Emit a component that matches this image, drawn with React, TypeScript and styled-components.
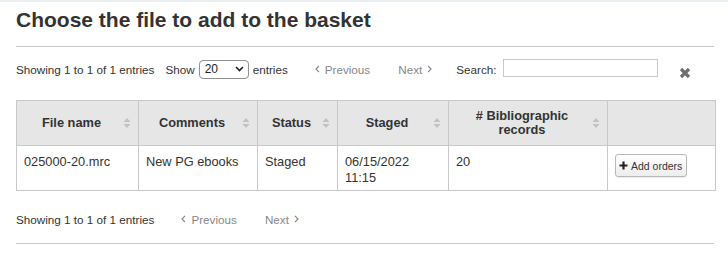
import React from "react";
import styled, { createGlobalStyle } from "styled-components";

const GlobalStyle = createGlobalStyle`
  html, body {
    margin: 0;
    padding: 0;
    background: #ffffff;
  }
  body {
    font-family: "Liberation Sans", Arial, sans-serif;
    color: #333333;
    border-top: 2px solid #e9eef2;
  }
`;

const Page = styled.div`
  padding: 0 14px 0 16px;
`;

const Title = styled.h1`
  margin: 0;
  padding-top: 6px;
  height: 38px;
  font-size: 21px;
  font-weight: bold;
  color: #333333;
`;

const Rule = styled.hr<{ $top?: number }>`
  margin: ${(p) => p.$top ?? 0}px 0 0 0;
  border: 0;
  border-top: 1px solid #c8c8c8;
`;

const InfoBar = styled.div<{ $top: number; $height: number }>`
  display: flex;
  align-items: center;
  height: ${(p) => p.$height}px;
  margin-top: ${(p) => p.$top}px;
  font-size: 11.7px;
`;

const Info = styled.span<{ $gap: number }>`
  margin-right: ${(p) => p.$gap}px;
  color: #333;
`;

const Label = styled.span`
  color: #333;
`;

const Select = styled.div`
  display: flex;
  align-items: center;
  justify-content: space-between;
  box-sizing: border-box;
  width: 50px;
  height: 19px;
  margin: 0 4px 0 4px;
  padding: 0 4px 0 5px;
  border: 1px solid #8f8f8f;
  border-radius: 4px;
  font-size: 12px;
  color: #222;
`;

const PageLink = styled.span<{ $gap: number }>`
  display: flex;
  align-items: center;
  gap: 5px;
  color: #888888;
  margin-right: ${(p) => p.$gap}px;
`;

const SearchInput = styled.div`
  box-sizing: border-box;
  width: 155px;
  height: 18px;
  margin-left: 6px;
  margin-top: -2px;
  border: 1px solid #c8c8c8;
`;

const Clear = styled.span`
  display: flex;
  margin-left: 21px;
  margin-top: 7px;
`;

const Spacer = styled.div<{ $h: number }>`
  height: ${(p) => p.$h}px;
`;

const Table = styled.table`
  width: 699px;
  border-collapse: collapse;
  table-layout: fixed;
  font-size: 12.8px;
`;

const Th = styled.th<{ $w: number }>`
  width: ${(p) => p.$w}px;
  height: 45px;
  padding: 0 8px;
  background: #e6e6e6;
  border: 1px solid #c8c8c8;
  font-weight: bold;
  color: #333;
  line-height: 14px;
  box-sizing: border-box;
`;

const HeadInner = styled.div`
  position: relative;
  display: flex;
  align-items: center;
  justify-content: center;
  padding-right: 12px;
`;

const HeadText = styled.span`
  max-width: 110px;
`;

const SortIcon = styled.svg`
  position: absolute;
  right: -1px;
  top: 50%;
  margin-top: -6px;
`;

const Td = styled.td`
  height: 45px;
  padding: 8px 7px 0 7px;
  vertical-align: top;
  border: 1px solid #c8c8c8;
  color: #333;
  line-height: 16px;
  box-sizing: border-box;
`;

const Button = styled.button`
  display: inline-flex;
  align-items: center;
  gap: 3px;
  height: 23px;
  padding: 0 4px 0 3px;
  font-family: "Liberation Sans", Arial, sans-serif;
  font-size: 10.5px;
  color: #333;
  background: linear-gradient(#ffffff, #ededed);
  border: 1px solid #b8b8b8;
  border-radius: 3px;
  box-shadow: 0 1px 1px rgba(0, 0, 0, 0.08);
`;

const Sort = () => (
  <SortIcon width="8" height="12" viewBox="0 0 8 12">
    <path d="M4 1 L7.5 5 L0.5 5 Z" fill="#c2c2c2" />
    <path d="M4 11 L7.5 7 L0.5 7 Z" fill="#c2c2c2" />
  </SortIcon>
);

const Chevron = ({ dir }: { dir: "left" | "right" }) => (
  <svg width="5" height="8" viewBox="0 0 5 8">
    <path
      d={dir === "left" ? "M4 0.8 L1 4 L4 7.2" : "M1 0.8 L4 4 L1 7.2"}
      stroke="#888"
      strokeWidth="1.2"
      fill="none"
    />
  </svg>
);

const headers: [string, number][] = [
  ["File name", 122],
  ["Comments", 119],
  ["Status", 80],
  ["Staged", 111],
  ["# Bibliographic records", 159],
  ["", 108],
];

export default function App() {
  return (
    <Page>
      <GlobalStyle />
      <Title>Choose the file to add to the basket</Title>
      <Rule />
      <InfoBar $top={11} $height={22}>
        <Info $gap={11}>Showing 1 to 1 of 1 entries</Info>
        <Label>Show</Label>
        <Select>
          <span>20</span>
          <svg width="9" height="6" viewBox="0 0 9 6">
            <path d="M1 1 L4.5 4.5 L8 1" stroke="#222" strokeWidth="1.6" fill="none" />
          </svg>
        </Select>
        <Info $gap={27}>entries</Info>
        <PageLink $gap={28}>
          <Chevron dir="left" />
          Previous
        </PageLink>
        <PageLink $gap={24}>
          Next
          <Chevron dir="right" />
        </PageLink>
        <Label>Search:</Label>
        <SearchInput />
        <Clear>
          <svg width="12" height="12" viewBox="0 0 12 12">
            <path d="M2 2 L10 10 M10 2 L2 10" stroke="#6f6f6f" strokeWidth="3.2" strokeLinecap="butt" />
          </svg>
        </Clear>
      </InfoBar>
      <Spacer $h={20} />
      <Table>
        <thead>
          <tr>
            {headers.map(([h, w], i) => (
              <Th key={i} $w={w}>
                {h && (
                  <HeadInner>
                    <HeadText>{h}</HeadText>
                    <Sort />
                  </HeadInner>
                )}
              </Th>
            ))}
          </tr>
        </thead>
        <tbody>
          <tr>
            <Td>025000-20.mrc</Td>
            <Td>New PG ebooks</Td>
            <Td>Staged</Td>
            <Td>
              06/15/2022
              <br />
              11:15
            </Td>
            <Td>20</Td>
            <Td>
              <Button>
                <svg width="9" height="9" viewBox="0 0 9 9">
                  <path d="M4.5 0.5 V8.5 M0.5 4.5 H8.5" stroke="#222" strokeWidth="2.2" />
                </svg>
                Add orders
              </Button>
            </Td>
          </tr>
        </tbody>
      </Table>
      <InfoBar $top={17} $height={22}>
        <Info $gap={27}>Showing 1 to 1 of 1 entries</Info>
        <PageLink $gap={28}>
          <Chevron dir="left" />
          Previous
        </PageLink>
        <PageLink $gap={0}>
          Next
          <Chevron dir="right" />
        </PageLink>
      </InfoBar>
      <Rule $top={13} />
    </Page>
  );
}
